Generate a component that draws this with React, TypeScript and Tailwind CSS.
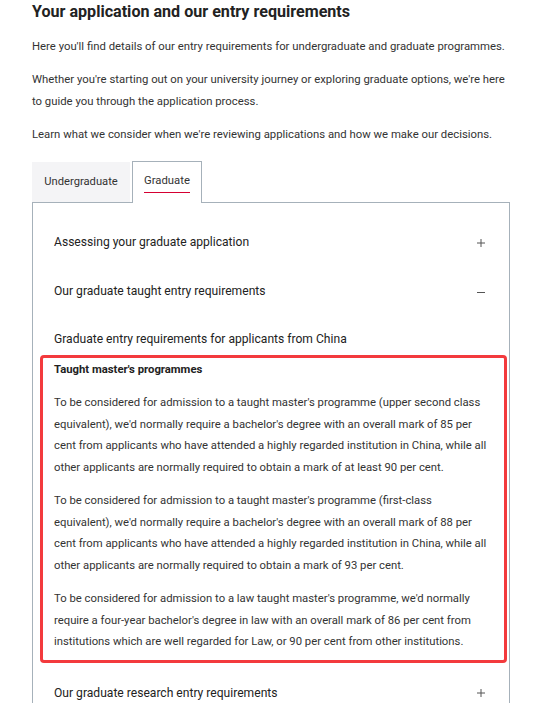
import React from 'react';

function PlusIcon() {
  return (
    <svg width="8" height="8" viewBox="0 0 8 8" className="shrink-0 text-[#555]">
      <path d="M0 4h8M4 0v8" stroke="currentColor" strokeWidth="1" />
    </svg>
  );
}

function MinusIcon() {
  return (
    <svg width="8" height="8" viewBox="0 0 8 8" className="shrink-0 text-[#555]">
      <path d="M0 4.5h8" stroke="currentColor" strokeWidth="1" />
    </svg>
  );
}

function AccordionRow({ title, open }: { title: string; open?: boolean }) {
  return (
    <div className="flex h-[49px] items-center justify-between pr-[2px]">
      <span className="text-[12.1px] text-[#222]">{title}</span>
      {open ? <MinusIcon /> : <PlusIcon />}
    </div>
  );
}

export default function App() {
  return (
    <div className="h-screen overflow-hidden bg-white pr-5 pl-8 font-['Roboto','Liberation_Sans',sans-serif] text-[#333]">
      <h2 className="text-[16.1px] font-bold leading-[24px] text-[#222]">
        Your application and our entry requirements
      </h2>
      <div className="mt-[11px] flex flex-col gap-[11px] text-[11.33px] leading-[22px]">
        <p>Here you'll find details of our entry requirements for undergraduate and graduate programmes.</p>
        <p>
          Whether you're starting out on your university journey or exploring graduate options, we're here
          to guide you through the application process.
        </p>
        <p>Learn what we consider when we're reviewing applications and how we make our decisions.</p>
      </div>

      {/* Tabs */}
      <div className="mt-4 flex w-[478px] items-end">
        <div className="flex h-[40px] w-[98px] items-center justify-center bg-[#f4f4f6] text-[11.2px] text-[#333]">
          Undergraduate
        </div>
        <div className="relative z-10 -mb-px ml-[2px] flex h-[42px] w-[70px] items-center justify-center border border-b-0 border-[#a6b1ba] bg-white text-[11.3px] text-[#333]">
          <span className="border-b-[1.5px] border-[#d50032] pb-[3px] leading-[16px]">Graduate</span>
        </div>
      </div>

      {/* Panel */}
      <div className="w-[478px] border border-[#a6b1ba] pt-[15px] pr-[22px] pl-[21px]">
        <AccordionRow title="Assessing your graduate application" />
        <AccordionRow title="Our graduate taught entry requirements" open />
        <div className="pt-[13px]">
          <h3 className="text-[12.1px] leading-[20px] text-[#222]">
            Graduate entry requirements for applicants from China
          </h3>
          <div className="-mr-[20px] -ml-[14px] mt-[6px] rounded-[4px] border-[3px] border-[#f33a3d] pt-[2px] pr-[12px] pb-[7px] pl-[11px]">
            <h4 className="text-[11.3px] font-bold leading-[20px] text-[#222]">Taught master's programmes</h4>
            <div className="mt-[12px] flex flex-col gap-[12px] text-[11.3px] leading-[21.5px]">
              <p>
                To be considered for admission to a taught master's programme (upper second class
                equivalent), we'd normally require a bachelor's degree with an overall mark of 85 per
                cent from applicants who have attended a highly regarded institution in China, while all
                other applicants are normally required to obtain a mark of at least 90 per cent.
              </p>
              <p>
                To be considered for admission to a taught master's programme (first-class
                equivalent), we'd normally require a bachelor's degree with an overall mark of 88 per
                cent from applicants who have attended a highly regarded institution in China, while all
                other applicants are normally required to obtain a mark of 93 per cent.
              </p>
              <p>
                To be considered for admission to a law taught master's programme, we'd normally
                require a four-year bachelor's degree in law with an overall mark of 86 per cent from
                institutions which are well regarded for Law, or 90 per cent from other institutions.
              </p>
            </div>
          </div>
        </div>
        <div className="mt-[6px]">
          <AccordionRow title="Our graduate research entry requirements" />
        </div>
      </div>
    </div>
  );
}
